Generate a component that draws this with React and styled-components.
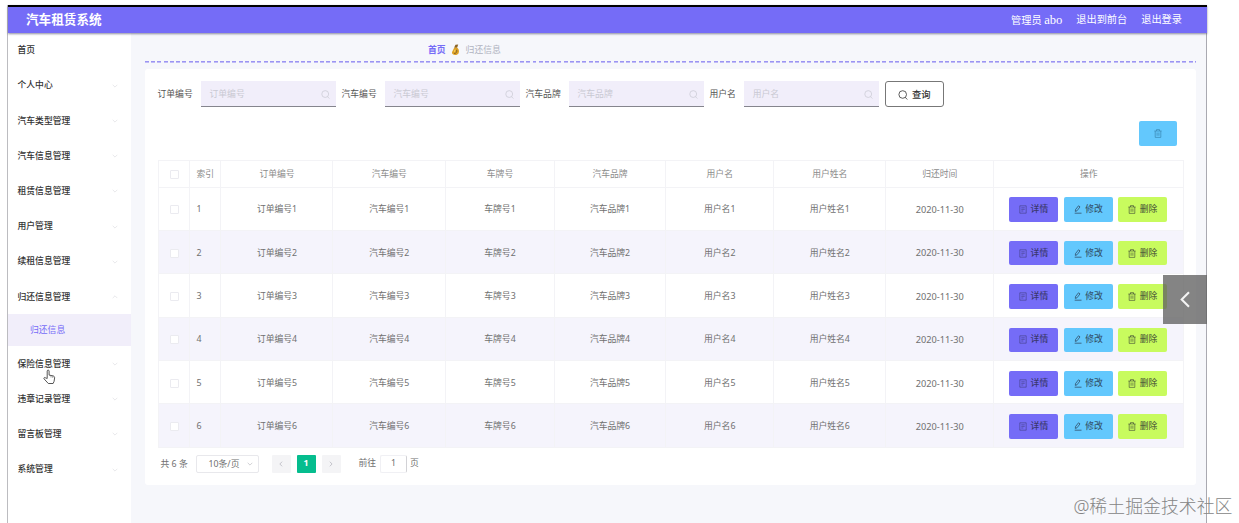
import React from 'react'
import styled, {createGlobalStyle} from 'styled-components'

const colors = {
  primary: '#756cf7',
  blue: '#63c8fd',
  lime: '#c8fb5e',
  green: '#05bd8e',
  page: '#f6f7fb',
  stripe: '#f5f4fc',
  border: '#f3f3f6',
  text: '#707070',
}

const menuTop = ['首页', '个人中心', '汽车类型管理', '汽车信息管理', '租赁信息管理', '用户管理', '续租信息管理', '归还信息管理']
const menuBottom = ['保险信息管理', '违章记录管理', '留言板管理', '系统管理']
const filters = ['订单编号', '汽车编号', '汽车品牌', '用户名']
const columns = ['订单编号', '汽车编号', '车牌号', '汽车品牌', '用户名', '用户姓名']
const rows = [1, 2, 3, 4, 5, 6]

const SearchIcon = ({size = 9}) => (
  <svg width={size} height={size} viewBox="0 0 10 10" fill="none" stroke="currentColor" strokeWidth="0.8">
    <circle cx="4.7" cy="4.5" r="3.8" />
    <path d="M7.2 7.3 9.3 9.5" />
  </svg>
)

const TrashIcon = () => (
  <svg width="8" height="9" viewBox="0 0 8 9" fill="none" stroke="currentColor" strokeWidth="0.7">
    <path d="M.4 2h7.2M2.5 2V.6h3V2M1.2 2v6.4h5.6V2M3.1 3.5v3.3M4.9 3.5v3.3" />
  </svg>
)

const DetailIcon = () => (
  <svg width="8" height="9" viewBox="0 0 8 9" fill="none" stroke="currentColor" strokeWidth="0.7" opacity="0.7">
    <path d="M.8.8h6.4v7.4H.8zM2.3 2.8h3.4M2.3 4.4h3.4M2.3 6h2" />
  </svg>
)

const EditIcon = () => (
  <svg width="8" height="9" viewBox="0 0 8 9" fill="none" stroke="currentColor" strokeWidth="0.8">
    <path d="M4.5.8 6 1.9 3 5.8l-1.7.6.2-1.8zM.7 8.2h6.8" />
  </svg>
)

const Chevron = ({d, size = 6, width = 0.8}) => (
  <svg width={size} height={size} viewBox="0 0 6 6" fill="none" stroke="currentColor" strokeWidth={width}>
    <path d={d} />
  </svg>
)

const down = 'M.7 1.8 3 4.1 5.3 1.8'
const up = 'M.7 4.1 3 1.8 5.3 4.1'
const left = 'M4.1.7 1.8 3l2.3 2.3'
const right = 'M1.8.7 4.1 3 1.8 5.3'

const PouchIcon = () => (
  <svg width="9" height="12" viewBox="0 0 9 12">
    <path d="M5.2 3C7.9 4.4 8.6 7 7.6 9.3 6.6 11.4 3 11.6 1.5 10 .1 8.2 2.1 6.7 3.3 3.5z" fill="#dda126" />
    <path d="M3.2 3.4 4.5.8 7.2.5 6.2 3.6z" fill="#8b6425" />
    <path d="M3.1 9.5C5.2 9.6 6.1 8 5.7 5.8" fill="none" stroke="#66502b" strokeWidth="0.8" />
    <path d="M3.3 7.8 4.2 5.7" stroke="#f9dc6c" strokeWidth="0.9" />
  </svg>
)

function MenuItem({label, open}) {
  return (
    <Item>
      {label}
      {label !== '首页' && <Chevron d={open ? up : down} />}
    </Item>
  )
}

function Row({n}) {
  return (
    <GridRow $striped={n % 2 === 0}>
      <Cell><Checkbox /></Cell>
      <Cell $left>{n}</Cell>
      {columns.map(name => <Cell key={name}>{name}{n}</Cell>)}
      <Cell><DateText>2020-11-30</DateText></Cell>
      <Cell $gap="5.8px" $actions>
        <Action $color={colors.primary}><DetailIcon />详情</Action>
        <Action $color={colors.blue}><EditIcon />修改</Action>
        <Action $color={colors.lime}><TrashIcon />删除</Action>
      </Cell>
    </GridRow>
  )
}

export default function App() {
  return (
    <Page>
      <GlobalStyle />
      <Frame>
        <Header>
          <Brand>汽车租赁系统</Brand>
          <HeaderLink>管理员 <span>abo</span></HeaderLink>
          <HeaderLink>退出到前台</HeaderLink>
          <HeaderLink>退出登录</HeaderLink>
        </Header>
        <Body>
          <Sidebar>
            {menuTop.map(label => <MenuItem key={label} label={label} open={label === '归还信息管理'} />)}
            <SubItem>归还信息</SubItem>
            {menuBottom.map(label => <MenuItem key={label} label={label} />)}
          </Sidebar>
          <Main>
            <Breadcrumb>
              <b>首页</b>
              <PouchIcon />
              <span>归还信息</span>
            </Breadcrumb>
            <Panel>
              <Filters>
                {filters.map(name => (
                  <Field key={name}>
                    {name}
                    <Input>{name}<SearchIcon /></Input>
                  </Field>
                ))}
                <Query><SearchIcon size={10} />查询</Query>
              </Filters>
              <Toolbar>
                <BulkDelete><TrashIcon /></BulkDelete>
              </Toolbar>
              <Table>
                <GridRow $head>
                  <Cell><Checkbox /></Cell>
                  <Cell $left>索引</Cell>
                  {columns.map(name => <Cell key={name}>{name}</Cell>)}
                  <Cell>归还时间</Cell>
                  <Cell>操作</Cell>
                </GridRow>
                {rows.map(n => <Row key={n} n={n} />)}
              </Table>
              <Pagination>
                <Total>共 6 条</Total>
                <PageSize>10条/页<Chevron d={down} /></PageSize>
                <PageButton><Chevron d={left} /></PageButton>
                <PageButton $active>1</PageButton>
                <PageButton><Chevron d={right} /></PageButton>
                <Jump>前往<JumpInput>1</JumpInput>页</Jump>
              </Pagination>
            </Panel>
          </Main>
        </Body>
      </Frame>
      <Drawer><Chevron d={left} size={19} width={0.65} /></Drawer>
      <Pointer width="13" height="16" viewBox="0 0 13 16">
        <path d="M4.2 9.5V2.1c0-1.4 1.9-1.4 1.9 0v4l4 .8c1.2.3 1.6 1 1.5 2.1l-.5 3.3-1 2.2H5.3L1 9.8c-.5-1 .6-1.7 1.5-1z" fill="#fff" stroke="#444" strokeWidth="0.9" />
        <path d="M8 6.5v2M9.8 7v2" stroke="#666" strokeWidth="0.6" />
      </Pointer>
      <Watermark>@稀土掘金技术社区</Watermark>
    </Page>
  )
}

const GlobalStyle = createGlobalStyle`
* { box-sizing: border-box; }
body {
  margin: 0;
  background: #fff;
  overflow: hidden;
  font-family: "Noto Sans", "Noto Sans CJK SC", sans-serif;
  font-size: 8.8px;
  line-height: 1;
  color: ${colors.text};
}
svg { flex: none; display: block; }
`

const Page = styled.div`
  position: relative;
  width: 1239px;
  height: 523px;
  padding: 5px 32px 0 7px;
  overflow: hidden;
`

const Frame = styled.div`
  height: 518px;
  display: flex;
  flex-direction: column;
  border-left: 1px solid #bcbcc0;
  border-right: 1px solid #a9a9b1;
  background: ${colors.page};
`

const Header = styled.header`
  flex: none;
  height: 27.5px;
  margin-right: -1px;
  display: flex;
  align-items: center;
  gap: 14px;
  padding: 1px 25px 0 18px;
  border-top: 2.5px solid #000;
  background: ${colors.primary};
  box-shadow: 0 1px 2px rgba(50, 50, 80, .55);
  color: #fff;
  z-index: 1;
`

const Brand = styled.h1`
  flex: 1;
  margin: 0;
  font-size: 12.6px;
  font-weight: 700;
`

const HeaderLink = styled.span`
  font-family: "Liberation Serif", "Noto Sans CJK SC", serif;
  font-size: 10.2px;
  white-space: nowrap;

  span {
    font-size: 12.6px;
  }
`

const Body = styled.div`
  flex: 1;
  display: flex;
  min-height: 0;
`

const Sidebar = styled.nav`
  flex: none;
  width: 122.5px;
  background: #fff;
`

const Item = styled.div`
  height: 35.2px;
  display: flex;
  align-items: center;
  justify-content: space-between;
  padding: 1px 13px 0 9.5px;
  color: #333;
  font-weight: 500;

  svg {
    color: #e2e2e6;
  }
`

const SubItem = styled.div`
  height: 32px;
  display: flex;
  align-items: center;
  padding-left: 22px;
  background: #f1eefa;
  color: ${colors.primary};
`

const Main = styled.main`
  flex: 1;
  padding: 0 10.5px 0 14.5px;
`

const Breadcrumb = styled.div`
  height: 30.5px;
  display: flex;
  align-items: center;
  gap: 5.5px;
  padding: 5px 0 0 283px;
  margin-bottom: 6px;
  background: repeating-linear-gradient(90deg, #9b94f3 0 3.8px, transparent 3.8px 6.25px) left bottom / 100% 1.6px no-repeat;

  b {
    color: ${colors.primary};
  }
  span {
    color: #b0b3c0;
  }
`

const Panel = styled.section`
  height: 416px;
  padding: 12px 12.5px 0;
  border-radius: 3px;
  background: #fff;
`

const Filters = styled.div`
  display: flex;
  align-items: center;
  gap: 6px;
  height: 26px;
`

const Field = styled.label`
  display: flex;
  align-items: center;
  gap: 7.8px;
  color: #555;
  white-space: nowrap;
`

const Input = styled.div`
  width: 135px;
  height: 26px;
  display: flex;
  align-items: center;
  justify-content: space-between;
  padding: 1px 6px 0 9px;
  border-bottom: 1.5px solid #85858d;
  background: #f1eefa;
  color: #c9c9d3;
`

const Query = styled.button`
  width: 59px;
  height: 26px;
  display: flex;
  align-items: center;
  justify-content: center;
  gap: 4px;
  padding: 1px 0 0;
  border: 1px solid #777;
  border-radius: 3px;
  background: #fff;
  color: #333;
  font: inherit;
  font-size: 9.3px;
  font-weight: 500;
`

const Toolbar = styled.div`
  display: flex;
  justify-content: flex-end;
  padding: 14px 7px 14.5px 0;
`

const BulkDelete = styled.button`
  width: 38px;
  height: 24.5px;
  display: flex;
  align-items: center;
  justify-content: center;
  padding: 0;
  border: 0;
  border-radius: 2px;
  background: ${colors.blue};
  color: #3a86b2;
`

const Table = styled.div`
  width: 1026px;
  border-top: 1px solid ${colors.border};
  border-left: 1px solid ${colors.border};
`

const GridRow = styled.div`
  display: grid;
  grid-template-columns: 31px 31.5px 112px 112.5px 109px 111px 108.5px 111.5px 108.5px 1fr;
  height: ${props => props.$head ? '26.5px' : '43.4px'};
  background: ${props => props.$striped ? colors.stripe : '#fff'};
  color: ${props => props.$head ? '#8c8c8c' : colors.text};
`

const Cell = styled.div`
  display: flex;
  align-items: center;
  justify-content: ${props => props.$left ? 'flex-start' : 'center'};
  gap: ${props => props.$gap || 0};
  padding-top: 2px;
  padding-left: ${props => props.$left ? '7px' : props.$actions ? 0 : '1px'};
  border-right: 1px solid ${colors.border};
  border-bottom: 1px solid ${colors.border};
  white-space: nowrap;
`

const DateText = styled.span`
  font-size: 9.2px;
`

const Checkbox = styled.span`
  width: 9px;
  height: 9px;
  border: 1px solid #ebebf0;
  border-radius: 1px;
  background: #fff;
`

const Action = styled.button`
  width: 48.8px;
  height: 24.5px;
  display: flex;
  align-items: center;
  justify-content: center;
  gap: 3.5px;
  padding: 0;
  border: 0;
  border-radius: 2px;
  background: ${props => props.$color};
  color: rgba(30, 30, 45, .7);
  font: inherit;
  font-weight: 500;
`

const Pagination = styled.div`
  display: flex;
  align-items: center;
  padding: 7px 0 0 3px;
`

const Total = styled.span`
  width: 35px;
  padding-top: 1px;
  white-space: nowrap;
`

const PageSize = styled.div`
  width: 63.5px;
  height: 18px;
  display: flex;
  align-items: center;
  justify-content: space-between;
  padding: 1px 5px 0 12px;
  margin-right: 12.5px;
  border: 1px solid #e8e8ec;
  border-radius: 2px;

  svg {
    color: #c5c5ca;
  }
`

const PageButton = styled.div`
  width: 19px;
  height: 18px;
  display: flex;
  align-items: center;
  justify-content: center;
  margin-right: 6px;
  border-radius: 1px;
  background: ${props => props.$active ? colors.green : '#f4f4f6'};
  color: ${props => props.$active ? '#fff' : '#b8b8c0'};
  font-weight: 700;
`

const Jump = styled.div`
  display: flex;
  align-items: center;
  margin-left: 12px;
`

const JumpInput = styled.span`
  width: 27px;
  height: 18px;
  display: flex;
  align-items: center;
  justify-content: center;
  margin: 0 3px 0 4px;
  border: 1px solid #f0f0f4;
  border-right-color: #d2d2d6;
  border-radius: 2px;
`

const Drawer = styled.div`
  position: absolute;
  left: 1163px;
  top: 275px;
  width: 44px;
  height: 49px;
  display: flex;
  align-items: center;
  justify-content: center;
  background: rgba(98, 98, 98, .78);
  color: #f4f4f4;
`

const Pointer = styled.svg`
  position: absolute;
  left: 43px;
  top: 369px;
`

const Watermark = styled.div`
  position: absolute;
  right: 6.5px;
  bottom: 7px;
  color: #858585;
  font-size: 17.9px;
  font-weight: 300;
  line-height: 20px;
  white-space: nowrap;
`
